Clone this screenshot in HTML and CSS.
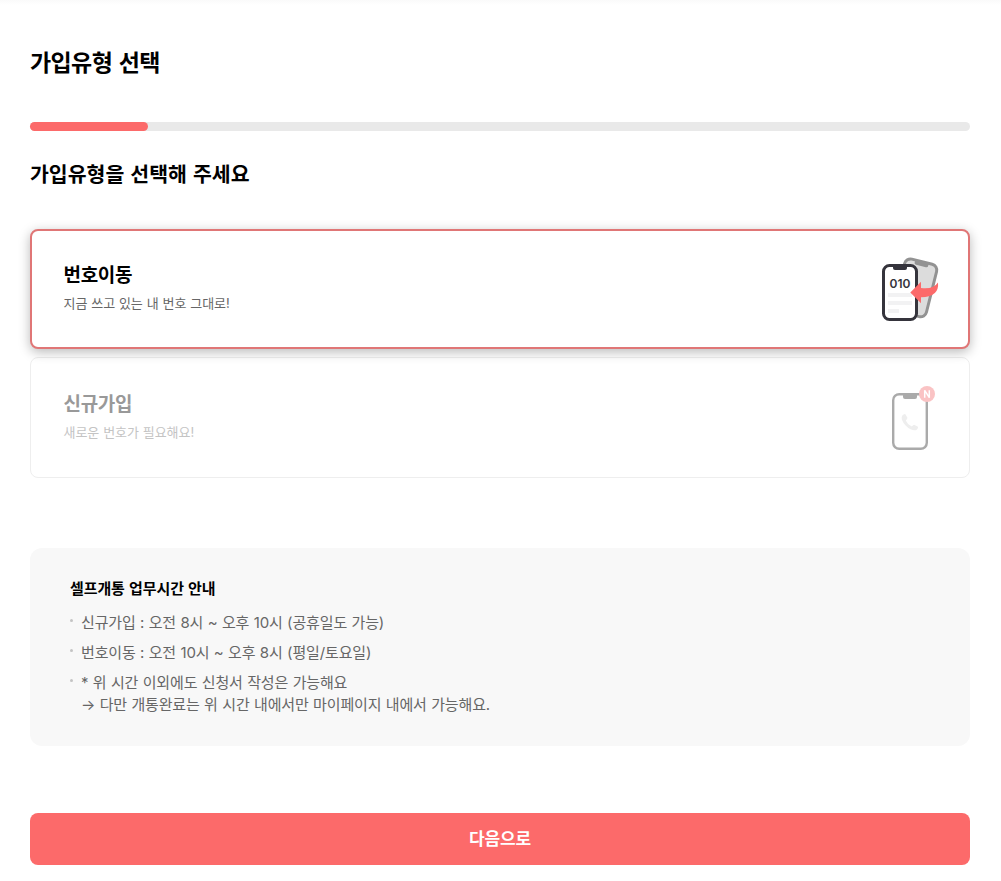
FILE: index.html
```
<!DOCTYPE html>
<html lang="ko">
<head>
    <meta charset="UTF-8">
    <meta name="viewport" content="width=device-width, initial-scale=1.0">
    <title>가입유형 선택</title>
    <link rel="stylesheet" href="styles.css">
</head>
<body>
    <main class="container">
        <h1 class="page-title">가입유형 선택</h1>
        <div class="progress"><div class="progress-bar"></div></div>
        <h2 class="question">가입유형을 선택해 주세요</h2>

        <div class="type-list">
            <div class="type-card selected">
                <div class="type-text">
                    <strong class="type-name">번호이동</strong>
                    <p class="type-desc">지금 쓰고 있는 내 번호 그대로!</p>
                </div>
                <svg class="type-icon" viewBox="0 0 80 80">
                    <g transform="rotate(14 46 38)">
                        <rect x="29" y="11" width="33" height="54" rx="6" fill="#dcdcdc" stroke="#929292" stroke-width="3"/>
                        <path d="M38.500 10.500h14v3q0 2-2 2h-10q-2 0-2-2z" fill="#929292"/>
                    </g>
                    <rect x="13.5" y="15.500" width="33" height="54" rx="6" fill="#fff" stroke="#35343c" stroke-width="3"/>
                    <path d="M23 15h14v3q0 2-2 2H25q-2 0-2-2z" fill="#35343c"/>
                    <text class="icon-number" x="30" y="37.800" text-anchor="middle">010</text>
                    <path d="M18 43h24v4H18zM18 51h24v4H18zM18 59h11v4H18z" fill="#f2f2f3"/>
                    <path d="M40.300 42.500 51 31.700V38q12.500 1.500 17-5.500Q69.500 47 51 47.300v6z" fill="#fc6a6a"/>
                </svg>
            </div>
            <div class="type-card">
                <div class="type-text">
                    <strong class="type-name">신규가입</strong>
                    <p class="type-desc">새로운 번호가 필요해요!</p>
                </div>
                <svg class="type-icon" viewBox="0 0 80 80">
                    <rect x="23.200" y="15.200" width="33.600" height="54.600" rx="6" fill="#fff" stroke="#aaa" stroke-width="2.400"/>
                    <path d="M33 15h14v3q0 2-2 2H35q-2 0-2-2z" fill="#aaa"/>
                    <path d="M32.300 36.600q2-2.200 3.300-1.200l1.800 3.300q.2 1-1.600 2.700 1.700 4.200 6 6.200 1.700-2 2.700-1.700l3.200 1.500q1.200.9-.7 3-2.200 1.800-6.400-.2-6-3-8.700-9.500-.7-2.500.4-4.100z" fill="#eee"/>
                    <circle cx="57" cy="15" r="8" fill="#fac3c4"/>
                    <path d="M54.700 18.700v-7.400l4.600 7.400v-7.400" fill="none" stroke="#fff" stroke-width="1.500" stroke-linejoin="bevel"/>
                </svg>
            </div>
        </div>

        <section class="notice">
            <h3 class="notice-title">셀프개통 업무시간 안내</h3>
            <ul class="notice-list">
                <li>신규가입 : 오전 8시 ~ 오후 10시 (공휴일도 가능)</li>
                <li>번호이동 : 오전 10시 ~ 오후 8시 (평일/토요일)</li>
                <li>* 위 시간 이외에도 신청서 작성은 가능해요<br>→ 다만 개통완료는 위 시간 내에서만 마이페이지 내에서 가능해요.</li>
            </ul>
        </section>

        <button class="next-btn" type="button">다음으로</button>
    </main>
</body>
</html>
```
FILE: styles.css
```
* { box-sizing: border-box; margin: 0; padding: 0; }
body { font-family: Inter, "Noto Sans CJK KR", sans-serif; background: linear-gradient(#fafafa, #fff 5px); color: #000; }
.container { width: 1000px; padding: 49px 30px 16px; }

.page-title { font-size: 23px; line-height: 28px; font-weight: 700; letter-spacing: -0.6px; word-spacing: 1.6px; }
.progress { height: 9px; margin-top: 45px; border-radius: 5px; background: #e9e9e9; }
.progress-bar { width: 118px; height: 9px; border-radius: 5px; background: #fc6a6a; }
.question { margin-top: 31px; font-size: 20.5px; line-height: 26px; font-weight: 700; letter-spacing: 0; word-spacing: 1.2px; }

.type-list { display: flex; flex-direction: column; gap: 8px; margin-top: 41px; }
.type-card { display: flex; justify-content: space-between; align-items: center; height: 121px; padding: 0 19px 0 32.5px; border: 1px solid #eee; border-radius: 8px; background: #fff; color: #999; }
.type-card.selected { position: relative; height: 120px; padding: 0 28px 0 31.5px; border: 2px solid #e07676; color: #000; box-shadow: 0 3px 12px rgba(0, 0, 0, 0.28); }
.type-text { padding-bottom: 2px; }
.type-name { display: block; font-size: 19px; line-height: 26px; font-weight: 700; letter-spacing: -0.3px; }
.type-desc { margin-top: 4px; font-size: 13px; line-height: 20px; letter-spacing: -0.05px; word-spacing: 0.3px; color: #c4c4c4; }
.selected .type-desc { color: #666; }
.type-icon { width: 80px; height: 80px; margin-top: 2px; }
.selected .type-icon { margin-right: -10px; }
.icon-number { font-size: 12px; font-weight: 600; fill: #35343c; }

.notice { height: 198px; margin-top: 70px; padding: 30px 40px; border-radius: 12px; background: #f8f8f8; }
.notice-title { font-size: 15px; line-height: 22px; font-weight: 700; letter-spacing: -0.1px; word-spacing: 0.8px; }
.notice-list { list-style: none; margin-top: 12px; }
.notice-list li { position: relative; margin-bottom: 8px; padding-left: 11px; font-size: 15px; line-height: 22px; letter-spacing: -0.15px; word-spacing: 0.4px; color: #666; }
.notice-list li::before { content: ""; position: absolute; left: 0; top: 7px; width: 3px; height: 3px; border-radius: 50%; background: #c4c4c4; }

.next-btn { display: block; width: 100%; height: 52px; margin-top: 67px; padding-bottom: 3px; border: 0; border-radius: 8px; background: #fc6a6a; color: #fff; font-family: inherit; font-size: 17px; font-weight: 700; letter-spacing: -0.1px; }
```
